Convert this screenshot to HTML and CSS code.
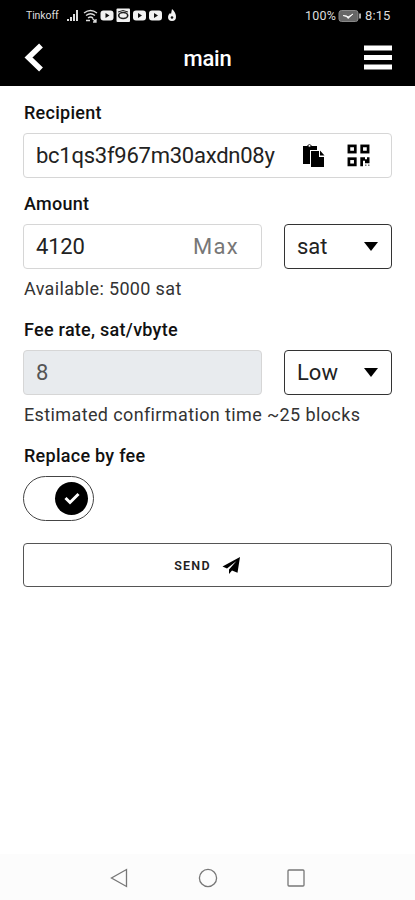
FILE: index.html
```html
<!DOCTYPE html>
<html lang="en">
<head>
<meta charset="utf-8">
<meta name="viewport" content="width=device-width">
<title>main</title>
<link rel="stylesheet" href="styles.css">
</head>
<body>
<header class="top">
  <div class="status">
    <span class="carrier">Tinkoff</span>
    <svg class="notifications" width="112" height="16" viewBox="0 0 112 16">
      <path d="M1 13v-2M4 13V9M7 13V6M10 13V2" stroke="#ddd" stroke-width="2"/>
      <g fill="none" stroke="#ddd" stroke-width="1.3"><path d="M17 5q6.500-5 13 0M19 7.500q4.500-3.500 9 0M21 10q2.500-2 5 0M19 12.500h4M25 10l4 4m0-3v3h-3"/></g>
      <g fill="#f2f2f2"><rect x="33.500" y="2.500" width="13" height="10" rx="3"/><rect x="49.500" y=".5" width="13.500" height="13.500" rx="1"/><rect x="66" y="2.500" width="13" height="10" rx="3"/><rect x="82" y="2.500" width="13" height="10" rx="3"/><path d="M105 1q4 3.500 4 8a4 4 0 0 1-8 0q0-2 2-4l1 1z"/></g>
      <g fill="#111"><path d="M38.500 5l4 2.500-4 2.500zM71 5l4 2.500-4 2.500zM87 5l4 2.500-4 2.500z"/><circle cx="105" cy="9.500" r="1.300"/></g>
      <ellipse cx="56.200" cy="7.500" rx="4.500" ry="3" fill="none" stroke="#222" stroke-width="1.600"/><path d="M51 4q5-3 10 0" fill="none" stroke="#222"/>
    </svg>
    <span class="battery-level">100%</span>
    <svg class="battery" width="24" height="14" viewBox="0 0 24 14"><rect x="1" y="1.500" width="19" height="11" rx="2.500" fill="#666" stroke="#888"/><path d="M21 4.500h2v5h-2z" fill="#aaa"/><path d="M5 6.500l4 .5 1 1 5-3-5 4.500-1.500-2z" fill="#fff" stroke="#fff" stroke-width=".8"/></svg>
    <span class="clock">8:15</span>
  </div>
  <nav class="bar">
    <svg width="20" height="30" viewBox="0 0 20 30"><path d="M17 2.500L4.500 14.500 17 26.500" fill="none" stroke="#fff" stroke-width="5.500"/></svg>
    <h1>main</h1>
    <svg class="menu" width="28" height="26" viewBox="0 0 28 26"><path d="M0 3h28M0 12.500h28M0 22h28" stroke="#fff" stroke-width="5"/></svg>
  </nav>
</header>
<main class="form">
  <div class="label"><span>Recipient</span></div>
  <div class="field address">
    <span class="address-text">bc1qs3f967m30axdn08y</span>
    <svg class="paste" width="23" height="25" viewBox="0 0 23 25"><path d="M1 3h4q2-3 5 0h5v4H8v14H1z"/><circle cx="7.500" cy="2.800" r="1.300" fill="#fff" stroke="#222" stroke-width=".7"/><path d="M9 8h8v6h5v10H9zM18 7.500l4.500 5H18z"/></svg>
    <svg class="qr" width="23" height="23" viewBox="0 0 23 23"><g fill="none" stroke="#000" stroke-width="2.700"><rect x="1.900" y="1.900" width="6.400" height="6.200"/><rect x="14.700" y="1.900" width="6.400" height="6.200"/><rect x="1.900" y="14.700" width="6.400" height="6.200"/></g><path d="M13.300 13.300H18v2h2v-2h2.500v6H18v-2.500h-2v5.500h-2.700z"/><path d="M18 20.500h1.500V22H18zM21 20.500h1.500V22H21z" fill="#777"/></svg>
  </div>
  <div class="label"><span>Amount</span></div>
  <div class="row">
    <div class="field amount"><span class="number">4120</span><span class="max">Max</span></div>
    <div class="field select"><span>sat</span><i class="caret"></i></div>
  </div>
  <div class="hint"><span class="available">Available: 5000 sat</span></div>
  <div class="label"><span>Fee rate, sat/vbyte</span></div>
  <div class="row">
    <div class="field disabled">8</div>
    <div class="field select"><span>Low</span><i class="caret"></i></div>
  </div>
  <div class="hint"><span class="estimate">Estimated confirmation time ~25 blocks</span></div>
  <div class="label"><span>Replace by fee</span></div>
  <div class="toggle"><div class="knob"><svg width="16" height="13" viewBox="0 0 16 13"><path d="M1.500 6L6 10.500 14.500 2" fill="none" stroke="#fff" stroke-width="3"/></svg></div></div>
  <div class="send"><span>SEND</span><svg width="19" height="19" viewBox="0 0 19 19"><path d="M18 1L.5 10.500l4.500 2L14.500 5 7 13.500v4.500l3-3.500 5.500 2.300z"/></svg></div>
</main>
<footer class="system">
  <svg width="18" height="20" viewBox="0 0 18 20"><path d="M16.500 1.500v17L1.500 10z"/></svg>
  <svg width="20" height="20" viewBox="0 0 20 20"><circle cx="10" cy="10" r="8.600"/></svg>
  <svg width="18" height="20" viewBox="0 0 18 20"><rect x="1" y="2" width="16" height="16" rx="1"/></svg>
</footer>
</body>
</html>
```
FILE: styles.css
```css
* { box-sizing: border-box; }
body {
  margin: 0;
  height: 900px;
  display: flex;
  flex-direction: column;
  background: #fff;
  color: #222;
  font-family: Roboto, "Liberation Sans", sans-serif;
  overflow: hidden;
}
svg { display: block; flex: none; }
span { white-space: nowrap; }
.top { height: 86px; background: #000; color: #fff; }
.status {
  height: 31px;
  padding: 0 24px 0 26px;
  display: flex;
  align-items: center;
  color: #ddd;
}
.carrier { width: 33px; font-size: 10.500px; letter-spacing: -.1px; }
.notifications { margin-left: 8px; }
.battery-level { margin-left: auto; font-size: 12.500px; letter-spacing: .2px; }
.battery { margin: 0 3px 0 2px; }
.clock { width: 26px; font-size: 13px; letter-spacing: .1px; }
.bar {
  height: 55px;
  padding: 0 23px 2px 24px;
  display: flex;
  align-items: center;
  justify-content: space-between;
}
.bar h1 { margin: 2px 0 0 7px; font-size: 22px; font-weight: 500; letter-spacing: -.2px; }
.form { padding: 17px 23px 0; flex: 1; }
.label {
  height: 20px;
  margin-bottom: 10px;
  padding-left: 1px;
  line-height: 20px;
  font-size: 18px;
  font-weight: 500;
  letter-spacing: .27px;
  color: #111;
}
.field {
  height: 45px;
  display: flex;
  align-items: center;
  border: 1px solid #d6d6d6;
  border-radius: 4px;
  padding: 0 12px;
  font-size: 22px;
}
.address { padding-right: 21px; margin-bottom: 16px; }
.address-text { width: 240px; letter-spacing: -.25px; }
.paste { margin-left: 26px; }
.qr { margin-left: auto; }
.row { display: grid; grid-template-columns: 239px 108px; justify-content: space-between; }
.amount { justify-content: space-between; padding-right: 22px; }
.number { letter-spacing: -.2px; }
.max { color: #777; letter-spacing: 1.3px; }
.select { border-color: #333; justify-content: space-between; padding-right: 13px; }
.caret { width: 14px; height: 9px; background: #000; clip-path: polygon(0 0, 100% 0, 50% 100%); }
.hint {
  height: 20px;
  margin: 10px 0 21px;
  padding-left: 1px;
  line-height: 20px;
  font-size: 18px;
  color: #333;
}
.available { letter-spacing: .35px; }
.estimate { letter-spacing: .38px; }
.disabled { background: #e8ebee; color: #555; }
.toggle {
  width: 71px;
  height: 45px;
  border: 1px solid #444;
  border-radius: 23px;
  display: flex;
  align-items: center;
  justify-content: flex-end;
  padding-right: 5px;
}
.knob {
  width: 33px;
  height: 33px;
  border-radius: 50%;
  background: #000;
  display: grid;
  place-items: center;
}
.send {
  height: 44px;
  margin-top: 22px;
  border: 1px solid #555;
  border-radius: 4px;
  display: flex;
  align-items: center;
  justify-content: center;
  gap: 11px;
  font-size: 12.500px;
  font-weight: 600;
  letter-spacing: 1.2px;
}
.system {
  height: 46px;
  background: #fcfcfc;
  display: flex;
  align-items: center;
  justify-content: space-between;
  padding: 1px 110px 0;
}
.system svg { fill: none; stroke: #777; stroke-width: 1.3; }
```
